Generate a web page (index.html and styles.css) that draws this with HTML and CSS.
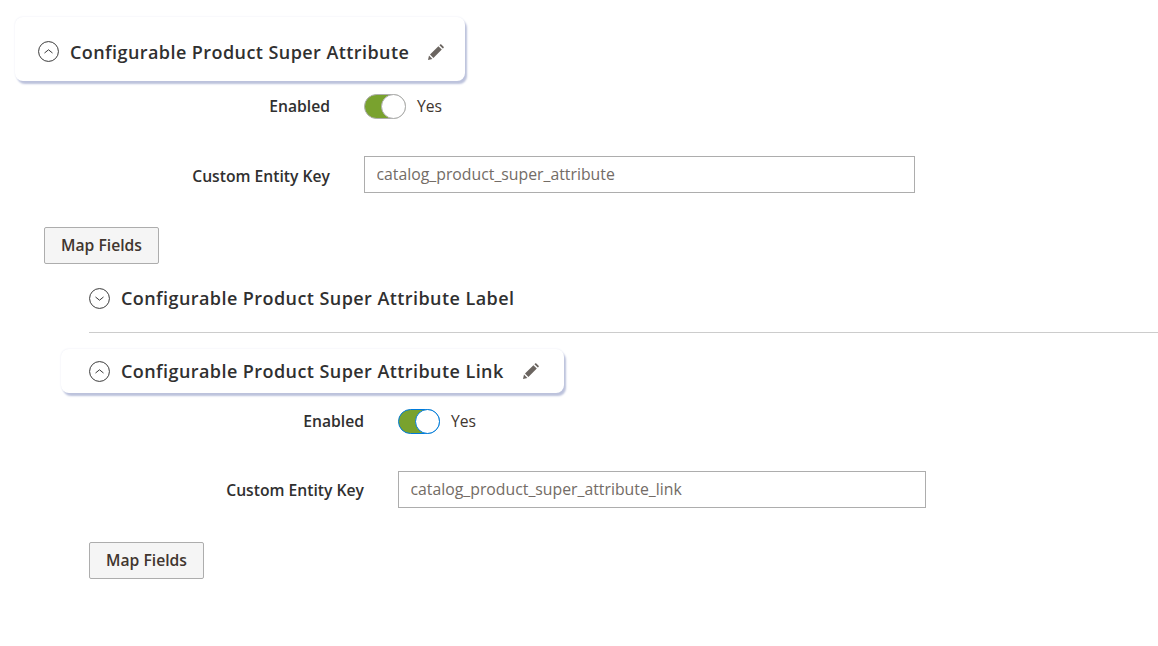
FILE: index.html
```html
<!DOCTYPE html>
<html lang="en">
<head>
    <meta charset="UTF-8">
    <title>Configurable Product Super Attribute</title>
    <link rel="stylesheet" href="styles.css">
</head>
<body>
    <div class="entity-head entity-head-main">
        <svg class="chevron" viewBox="0 0 22 22"><circle cx="11" cy="11" r="10.4"/><path d="M6.8 12.6 11 9.2l4.2 3.4"/></svg>
        <span class="entity-title">Configurable Product Super Attribute</span>
        <svg class="pencil" viewBox="0 0 16 16"><path d="M0 16l1-4.4 3.4 3.4zM2 10.6 10.4 2.2l3.4 3.4-8.4 8.4zM11.4 1.2l.7-.8c.4-.3.9-.3 1.2 0l2.3 2.3c.3.3.3.8 0 1.2l-.8.7z"/></svg>
    </div>

    <div class="field field-switch">
        <label class="field-label">Enabled</label>
        <span class="switch"><span class="knob"></span></span>
        <span class="switch-text">Yes</span>
    </div>
    <div class="field field-input">
        <label class="field-label">Custom Entity Key</label>
        <input class="text-input" type="text" value="catalog_product_super_attribute">
    </div>
    <button class="btn btn-first">Map Fields</button>

    <div class="nested">
        <div class="entity-row">
            <svg class="chevron" viewBox="0 0 22 22"><circle cx="11" cy="11" r="10.4"/><path d="M6.8 9.4 11 12.8l4.2-3.4"/></svg>
            <span class="entity-title">Configurable Product Super Attribute Label</span>
        </div>
        <div class="entity-head entity-head-sub">
            <svg class="chevron" viewBox="0 0 22 22"><circle cx="11" cy="11" r="10.4"/><path d="M6.8 12.6 11 9.2l4.2 3.4"/></svg>
            <span class="entity-title">Configurable Product Super Attribute Link</span>
            <svg class="pencil" viewBox="0 0 16 16"><path d="M0 16l1-4.4 3.4 3.4zM2 10.6 10.4 2.2l3.4 3.4-8.4 8.4zM11.4 1.2l.7-.8c.4-.3.9-.3 1.2 0l2.3 2.3c.3.3.3.8 0 1.2l-.8.7z"/></svg>
        </div>
        <div class="field field-switch field-sub">
            <label class="field-label">Enabled</label>
            <span class="switch switch-focus"><span class="knob"></span></span>
            <span class="switch-text">Yes</span>
        </div>
        <div class="field field-input field-sub">
            <label class="field-label">Custom Entity Key</label>
            <input class="text-input text-input-sub" type="text" value="catalog_product_super_attribute_link">
        </div>
        <button class="btn btn-sub">Map Fields</button>
    </div>
</body>
</html>
```

FILE: styles.css
```css
* {
    box-sizing: border-box;
}
body {
    margin: 0;
    background: #fff;
    color: #303030;
    font-family: "Open Sans", sans-serif;
    font-size: 15.7px;
    overflow: hidden;
}
.entity-head {
    display: flex;
    align-items: center;
    width: max-content;
    background: #fff;
    border-radius: 8px;
    box-shadow: 2px 3px 2px #bcc2dc, 0 0 2px #e6e8f2;
}
.entity-head-main {
    height: 64px;
    margin: 17px 0 0 15px;
    padding: 5px 21px 0 23px;
}
.entity-head-sub {
    height: 44px;
    margin-left: -28px;
    padding: 0 25px 0 28px;
}
.entity-row {
    display: flex;
    align-items: center;
    height: 69px;
    border-bottom: 1px solid #ccc;
    margin-bottom: 16px;
}
.chevron {
    width: 21px;
    height: 21px;
    margin-right: 11px;
    fill: none;
    stroke: #303030;
    stroke-width: 1;
    flex: none;
}
.entity-title {
    font-size: 18px;
    font-weight: 600;
    letter-spacing: 0.43px;
    line-height: 22px;
    color: #303030;
}
.pencil {
    width: 16px;
    height: 16px;
    margin-left: 19px;
    fill: #6b6560;
    flex: none;
}
.field {
    display: flex;
    align-items: center;
}
.field-label {
    width: 331px;
    padding-right: 1px;
    margin-right: 33px;
    text-align: right;
    font-weight: 600;
    color: #303030;
}
.field-input .field-label {
    padding-top: 2px;
}
.field-switch {
    height: 26px;
    margin-top: 12px;
}
.field-input {
    margin-top: 37px;
}
.field-sub .field-label {
    width: 276px;
}
.field-input.field-sub .field-label {
    padding-top: 0;
}
.switch {
    position: relative;
    display: block;
    width: 42px;
    height: 25px;
    background: #79a22e;
    border: 1px solid #adadad;
    border-radius: 13px;
}
.switch-focus {
    border-color: #007bdb;
}
.knob {
    position: absolute;
    top: -1px;
    right: -1px;
    width: 25px;
    height: 25px;
    background: #fff;
    border: 1px solid #adadad;
    border-radius: 50%;
}
.switch-focus .knob {
    border-color: #007bdb;
}
.switch-text {
    margin-left: 11px;
    color: #41362f;
}
.text-input {
    display: block;
    width: 551px;
    height: 37px;
    padding: 0 11.5px 1px;
    border: 1px solid #adadad;
    border-radius: 0;
    background: #fff;
    color: #736c66;
    font-family: "Open Sans", sans-serif;
    font-size: 15.8px;
    outline: none;
}
.text-input-sub {
    width: 528px;
}
.btn {
    display: block;
    width: 115px;
    height: 37px;
    padding: 0 0 2px;
    background: #f5f5f5;
    border: 1px solid #adadad;
    border-radius: 2px;
    color: #41362f;
    font-family: "Open Sans", sans-serif;
    font-size: 15.7px;
    font-weight: 600;
}
.btn-first {
    margin: 34px 0 0 44px;
}
.btn-sub {
    margin-top: 34px;
}
.nested {
    margin-left: 89px;
}
.entity-head-sub + .field-sub {
    margin-top: 15px;
}
.field-input.field-sub {
    margin-top: 37px;
}
```
